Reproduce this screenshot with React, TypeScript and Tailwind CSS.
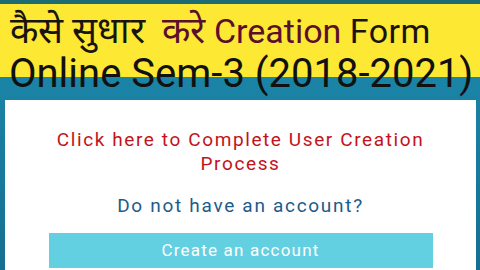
export default function App() {
  return (
    <div
      className="flex h-[270px] w-[480px] flex-col overflow-hidden bg-[linear-gradient(to_bottom,#1d6c74_0px,#1d6c74_4px,#fde834_4px,#fde834_77px,#1b84a6_77px,#156f92_270px)] font-['Roboto','Liberation_Sans',sans-serif]"
    >
      {/* title over the yellow band */}
      <div className="mt-[12px] whitespace-nowrap pl-[10px] text-[34px] leading-[38px] text-[#1a1410]">
        <span className="text-[37px] font-light">कैसे सुधार&nbsp;</span>{" "}
        <span className="text-[#5b0f2e]">
          <span className="text-[37px] font-light">करे</span> Creation
        </span>{" "}
        <span className="tracking-[0.5px]">Form</span>
      </div>
      <div className="mt-[2px] whitespace-nowrap pl-[9px] text-[40px] leading-[44px] text-[#111]">
        Online Sem-3 (2018-2021)
      </div>

      {/* white card */}
      <div className="ml-[5px] mr-[4px] mt-[4px] flex flex-1 flex-col items-center bg-white">
        <p className="mt-[28px] w-[400px] text-center text-[19px] leading-[24px] tracking-[1.6px] text-[#c4121a]">
          Click here to Complete User Creation Process
        </p>
        <p className="mt-[18px] text-[19px] leading-[24px] tracking-[1.7px] text-[#1d5b8a]">
          Do not have an account?
        </p>
        <div className="mt-[15px] flex h-[35px] w-[384px] items-center justify-center bg-[#63d0e1] text-[17px] tracking-[1.2px] text-white">
          Create an account
        </div>
      </div>
    </div>
  );
}
